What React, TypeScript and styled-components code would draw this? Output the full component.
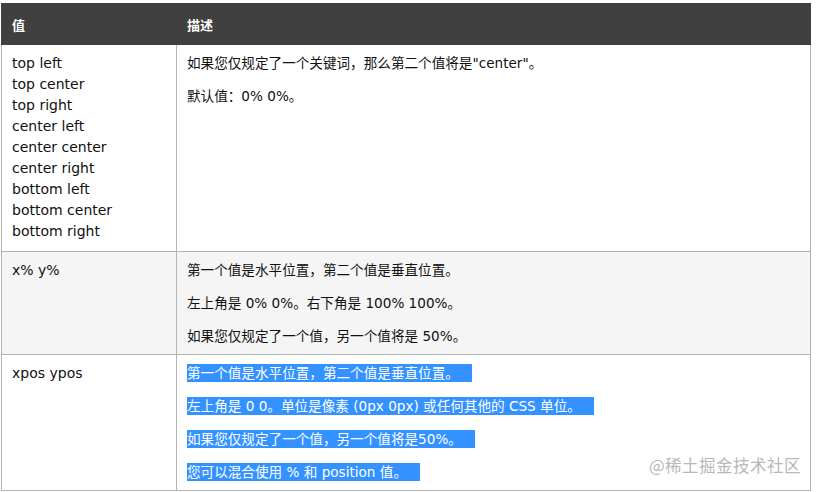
import React from 'react';
import styled, { createGlobalStyle } from 'styled-components';

const GlobalStyle = createGlobalStyle`
  html, body {
    margin: 0;
    padding: 0;
    background: #ffffff;
  }
`;

const Page = styled.div`
  position: relative;
  width: 817px;
  height: 492px;
  padding: 3px 0 0 1px;
  box-sizing: border-box;
  font-family: 'DejaVu Sans', Verdana, 'Noto Sans CJK SC', sans-serif;
  color: #111;
`;

const Table = styled.table`
  width: 810px;
  border-collapse: collapse;
  table-layout: fixed;
`;

const HeadCell = styled.th<{ width?: number }>`
  width: ${(props) => (props.width ? `${props.width}px` : 'auto')};
  height: 41px;
  padding: 0 10px;
  box-sizing: border-box;
  background: #404040;
  color: #ffffff;
  font-size: 13px;
  font-weight: bold;
  text-align: left;
  vertical-align: middle;
  border: 1px solid #404040;
`;

const Row = styled.tr<{ shaded?: boolean }>`
  background: ${(props) => (props.shaded ? '#f5f5f5' : '#ffffff')};
`;

const ValueCell = styled.td`
  padding: 8px 10px 9px;
  border: 1px solid #b4b4b4;
  vertical-align: top;
  font-size: 14px;
  line-height: 21px;
`;

const DescCell = styled.td`
  padding: 8px 10px;
  border: 1px solid #b4b4b4;
  vertical-align: top;
  font-size: 13.6px;
  line-height: 20px;
`;

const Para = styled.p`
  margin: 0 0 13px;
  &:last-child {
    margin-bottom: 0;
  }
`;

const Selected = styled.span`
  background: #3392ff;
  color: #ffffff;
  padding: 1px 13px 1px 0;
`;

const Watermark = styled.div`
  position: absolute;
  right: 16px;
  bottom: 15px;
  font-family: 'Noto Sans CJK SC', sans-serif;
  font-size: 16.5px;
  color: #b8b8b8;
  letter-spacing: 0.5px;
`;

const positions = [
  'top left',
  'top center',
  'top right',
  'center left',
  'center center',
  'center right',
  'bottom left',
  'bottom center',
  'bottom right',
];

const selectedLines = [
  '第一个值是水平位置，第二个值是垂直位置。',
  '左上角是 0 0。单位是像素 (0px 0px) 或任何其他的 CSS 单位。',
  '如果您仅规定了一个值，另一个值将是50%。',
  '您可以混合使用 % 和 position 值。',
];

export default function App() {
  return (
    <>
      <GlobalStyle />
      <Page>
        <Table>
          <thead>
            <tr>
              <HeadCell width={175}>值</HeadCell>
              <HeadCell>描述</HeadCell>
            </tr>
          </thead>
          <tbody>
            <Row>
              <ValueCell>
                {positions.map((p) => (
                  <div key={p}>{p}</div>
                ))}
              </ValueCell>
              <DescCell>
                <Para>如果您仅规定了一个关键词，那么第二个值将是"center"。</Para>
                <Para>默认值：0% 0%。</Para>
              </DescCell>
            </Row>
            <Row shaded>
              <ValueCell>x% y%</ValueCell>
              <DescCell>
                <Para>第一个值是水平位置，第二个值是垂直位置。</Para>
                <Para>左上角是 0% 0%。右下角是 100% 100%。</Para>
                <Para>如果您仅规定了一个值，另一个值将是 50%。</Para>
              </DescCell>
            </Row>
            <Row>
              <ValueCell>xpos ypos</ValueCell>
              <DescCell>
                {selectedLines.map((line) => (
                  <Para key={line}>
                    <Selected>{line}</Selected>
                  </Para>
                ))}
              </DescCell>
            </Row>
          </tbody>
        </Table>
        <Watermark>@稀土掘金技术社区</Watermark>
      </Page>
    </>
  );
}
